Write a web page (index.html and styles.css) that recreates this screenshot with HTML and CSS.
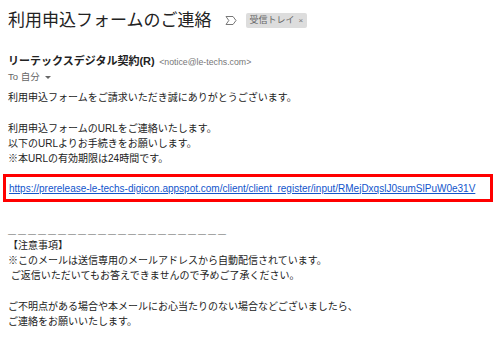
FILE: index.html
```html
<!DOCTYPE html>
<html lang="ja">
<head>
  <meta charset="utf-8">
  <title>利用申込フォームのご連絡</title>
  <link rel="stylesheet" href="styles.css">
</head>
<body>
  <div class="mail">
    <div class="subject-row">
      <h1 class="subject">利用申込フォームのご連絡</h1>
      <svg class="marker" width="12" height="9" viewBox="0 0 12 9">
        <path d="M1 0.5 H8 L11 4.5 L8 8.5 H1 L3.8 4.5 Z" fill="none" stroke="#777" stroke-width="1"/>
      </svg>
      <span class="label">受信トレイ<span class="label-x">×</span></span>
    </div>

    <div class="sender">
      <span class="sender-name">リーテックスデジタル契約(R)</span>
      <span class="sender-mail">&lt;notice@le-techs.com&gt;</span>
    </div>
    <div class="to">To 自分 <span class="caret"></span></div>

    <div class="body">
      <p>利用申込フォームをご請求いただき誠にありがとうございます。</p>
      <p>利用申込フォームのURLをご連絡いたします。<br>以下のURLよりお手続きをお願いします。<br>※本URLの有効期限は24時間です。</p>
      <div class="link-box">
        <a class="link" href="#">https://prerelease-le-techs-digicon.appspot.com/client/client_register/input/RMejDxqslJ0sumSlPuW0e31V</a>
      </div>
      <p class="rule">――――――――――――――――――――――</p>
      <p>【注意事項】<br>※このメールは送信専用のメールアドレスから自動配信されています。<br>&nbsp;ご返信いただいてもお答えできませんので予めご了承ください。</p>
      <p>ご不明点がある場合や本メールにお心当たりのない場合などございましたら、<br>ご連絡をお願いいたします。</p>
    </div>
  </div>
</body>
</html>
```

FILE: styles.css
```css
body {
  margin: 0;
  background-color: #fff;
  color: #222;
  font-family: "Liberation Sans", "Noto Sans CJK JP", sans-serif;
}

.mail {
  padding: 8px 7px 0 8px;
}

.subject-row {
  display: flex;
  align-items: center;
  height: 24px;
}

.subject {
  margin: 0;
  font-family: Roboto, "Noto Sans CJK JP", sans-serif;
  font-size: 17px;
  font-weight: normal;
  color: #222;
  line-height: 24px;
}

.marker {
  margin-left: 13px;
  margin-top: 1px;
}

.label {
  margin-left: 9px;
  padding: 0 4px;
  background-color: #ddd;
  border-radius: 2px;
  color: #666;
  font-size: 9px;
  line-height: 14px;
}

.label-x {
  margin-left: 4px;
  color: #777;
  font-size: 8px;
}

.sender {
  margin-top: 20px;
  line-height: 16px;
}

.sender-name {
  font-size: 11px;
  font-weight: bold;
  color: #222;
}

.sender-mail {
  font-size: 8.75px;
  color: #777;
}

.to {
  font-size: 9.5px;
  color: #666;
  line-height: 14px;
}

.caret {
  display: inline-block;
  margin-left: 3px;
  border-left: 3px solid transparent;
  border-right: 3px solid transparent;
  border-top: 3px solid #666;
  vertical-align: middle;
}

.body {
  margin-top: 6px;
  font-size: 10px;
  line-height: 15.25px;
  color: #222;
}

.body p {
  margin: 0 0 15.25px 0;
}

.link-box {
  margin: -8px 0 0 -5px;
  padding: 4px 0 3px 3px;
  border: 3px solid #f00;
}

.link {
  color: #15c;
  font-size: 10px;
  white-space: nowrap;
}

.body .rule {
  margin: 27px 0 0 0;
  color: #555;
  font-size: 8px;
  letter-spacing: 2px;
  line-height: 9px;
}
```
